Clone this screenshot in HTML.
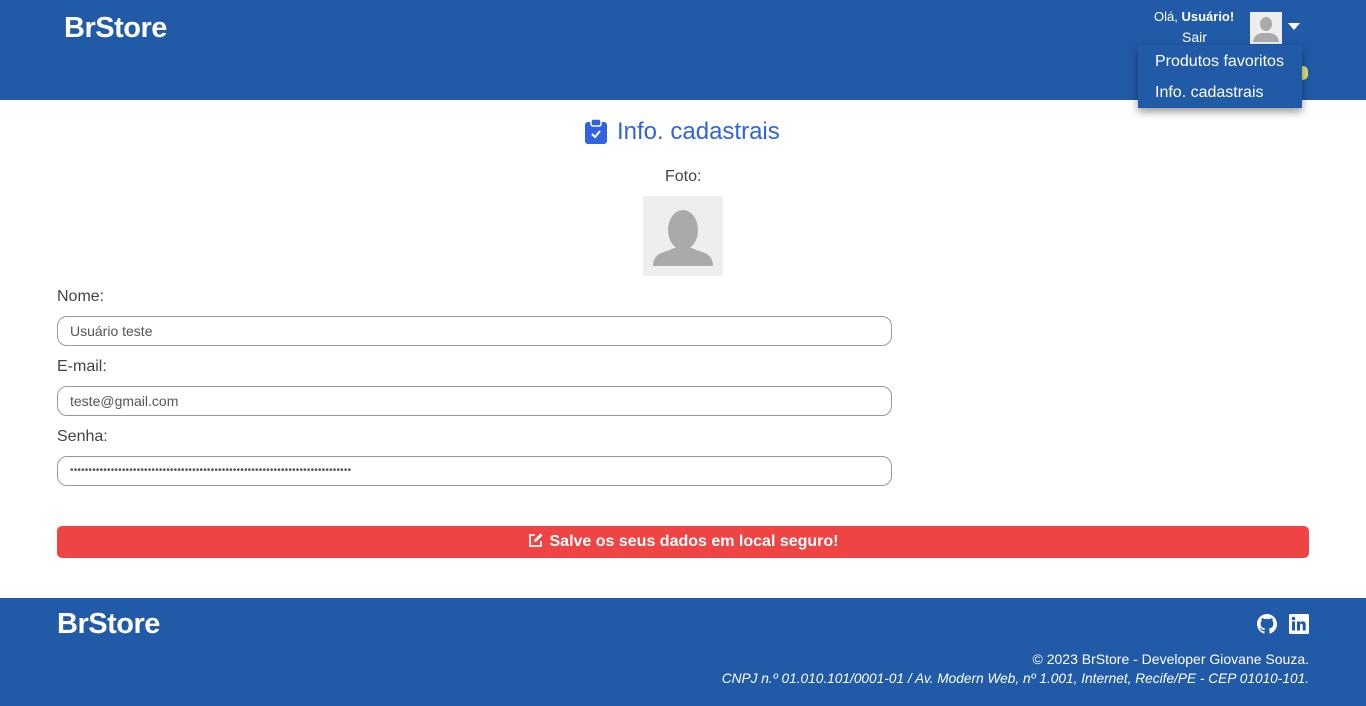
<!DOCTYPE html>
<html><head><meta charset="utf-8"><style>
*{box-sizing:border-box;margin:0;padding:0}
body{width:1366px;height:706px;font-family:"Liberation Sans",sans-serif;background:#fff;position:relative;overflow:hidden;color:#444}
.hdr{position:absolute;left:0;top:0;width:1366px;height:100px;background:#215aa6}
.logo{position:absolute;color:#fff;font-weight:bold;font-size:29px;letter-spacing:-0.5px}
.abs{position:absolute}
.inp{position:absolute;left:57px;width:835px;height:30px;border:1px solid #999;border-radius:10px;font-size:14px;color:#555;padding:6px 12px}
.lbl{position:absolute;left:57px;font-size:16px;color:#444}
.ftr{position:absolute;left:0;top:598px;width:1366px;height:108px;background:#215aa6;color:#fff}
</style></head><body>
<div class="hdr">
 <div class="logo" style="left:64px;top:12px">BrStore</div>
 <div class="abs" style="left:1154px;top:9px;color:#fff;font-size:13px">Olá, <b>Usuário!</b></div>
 <div class="abs" style="left:1182px;top:29px;color:#fff;font-size:14px">Sair</div>
 <div class="abs" style="left:1250px;top:12px;width:32px;height:32px;background:#eee">
  <svg width="32" height="32" viewBox="0 0 32 32"><ellipse cx="16" cy="12" rx="6" ry="7" fill="#aaa"/><path d="M3 30 Q4 22 12 21 L20 21 Q28 22 29 30 Z" fill="#aaa"/></svg>
 </div>
 <div class="abs" style="left:1288px;top:23px;width:0;height:0;border-left:6px solid transparent;border-right:6px solid transparent;border-top:7px solid #fff"></div>
 <div class="abs" style="left:1298px;top:66px;width:10px;height:14px;border-radius:7px;background:#d6e37a"></div>
 <div class="abs" style="left:1138px;top:45px;width:164px;height:63px;background:#215aa6;box-shadow:0 4px 8px rgba(0,0,0,.4)">
  <div class="abs" style="left:17px;top:8px;color:#fff;font-size:16px;white-space:nowrap">Produtos favoritos</div>
  <div class="abs" style="left:17px;top:39px;color:#fff;font-size:16px;white-space:nowrap">Info. cadastrais</div>
 </div>
</div>
<svg class="abs" style="left:585px;top:119px" width="22" height="25" viewBox="0 0 22 25"><rect x="0" y="3" width="22" height="22" rx="3" fill="#2f63e0"/><rect x="6" y="0" width="10" height="7" rx="2" fill="#2f63e0" stroke="#fff" stroke-width="1.5"/><path d="M7 15 L10 18 L15 12" stroke="#fff" stroke-width="2" fill="none"/></svg>
<div class="abs" style="left:617px;top:118px;font-size:24px;color:#2f63e0">Info. cadastrais</div>
<div class="abs" style="left:665px;top:168px;font-size:16px">Foto:</div>
<div class="abs" style="left:643px;top:196px;width:80px;height:80px;background:#eee">
 <svg width="80" height="80" viewBox="0 0 80 80"><ellipse cx="40" cy="34" rx="15" ry="20" fill="#aaa"/><path d="M10 70 Q10 58 24 55 L34 51 L46 51 L56 55 Q70 58 70 70 Z" fill="#aaa"/></svg>
</div>
<div class="lbl" style="top:288px">Nome:</div>
<div class="inp" style="top:316px">Usuário teste</div>
<div class="lbl" style="top:358px">E-mail:</div>
<div class="inp" style="top:386px">teste@gmail.com</div>
<div class="lbl" style="top:428px">Senha:</div>
<div class="inp" style="top:456px;font-size:10px;letter-spacing:0.2px;padding-top:8px;white-space:nowrap;overflow:hidden">••••••••••••••••••••••••••••••••••••••••••••••••••••••••••••••••••••••••••••</div>
<div class="abs" style="left:57px;top:526px;width:1252px;height:32px;background:#ef4444;border-radius:5px;color:#fff;font-weight:bold;font-size:16px;text-align:center;line-height:32px">
 <svg width="16" height="16" viewBox="0 0 16 16" style="vertical-align:-2px;margin-right:6px"><path d="M13 9 V14 H2 V3 H7" stroke="#fff" stroke-width="1.8" fill="none"/><path d="M6 10 L6.5 7.5 L12.5 1.5 L14.5 3.5 L8.5 9.5 Z" fill="#fff"/></svg>Salve os seus dados em local seguro!</div>
<div class="ftr">
 <div class="logo" style="left:57px;top:10px">BrStore</div>
 <svg class="abs" style="left:1257px;top:16px" width="20" height="20" viewBox="0 0 16 16"><path fill="#fff" d="M8 0C3.58 0 0 3.58 0 8c0 3.540 2.290 6.530 5.470 7.590.4.07.55-.17.55-.38 0-.19-.01-.82-.01-1.490-2.010.37-2.530-.49-2.690-.94-.09-.23-.48-.94-.82-1.130-.28-.15-.68-.52-.01-.53.63-.01 1.080.58 1.230.82.72 1.210 1.870.87 2.330.66.07-.52.28-.87.51-1.070-1.780-.2-3.640-.89-3.640-3.950 0-.87.31-1.590.82-2.150-.08-.2-.36-1.020.08-2.120 0 0 .67-.21 2.200.82.64-.18 1.320-.27 2-.27.68 0 1.360.09 2 .27 1.530-1.040 2.200-.82 2.200-.82.44 1.100.16 1.920.08 2.120.51.56.82 1.270.82 2.150 0 3.070-1.870 3.750-3.650 3.950.29.25.54.73.54 1.480 0 1.070-.01 1.930-.01 2.200 0 .21.15.46.55.38A8.013 8.013 0 0016 8c0-4.420-3.580-8-8-8z"/></svg>
 <svg class="abs" style="left:1289px;top:16px" width="20" height="20" viewBox="0 0 20 20"><rect width="20" height="20" rx="1" fill="#fff"/><rect x="3" y="7.5" width="3" height="9" fill="#215aa6"/><circle cx="4.5" cy="4.5" r="1.8" fill="#215aa6"/><path d="M8 7.5h3v1.3c.6-1 1.6-1.5 2.8-1.5 2.2 0 2.9 1.4 2.9 3.5v5.7h-3v-5c0-1.1-.3-1.8-1.3-1.8s-1.4.8-1.4 1.8v5h-3z" fill="#215aa6"/></svg>
 <div class="abs" style="right:57px;top:53px;font-size:14px;white-space:nowrap">© 2023 BrStore - Developer Giovane Souza.</div>
 <div class="abs" style="right:57px;top:73px;font-size:13.7px;font-style:italic;white-space:nowrap">CNPJ n.º 01.010.101/0001-01 / Av. Modern Web, nº 1.001, Internet, Recife/PE - CEP 01010-101.</div>
</div>
</body></html>
